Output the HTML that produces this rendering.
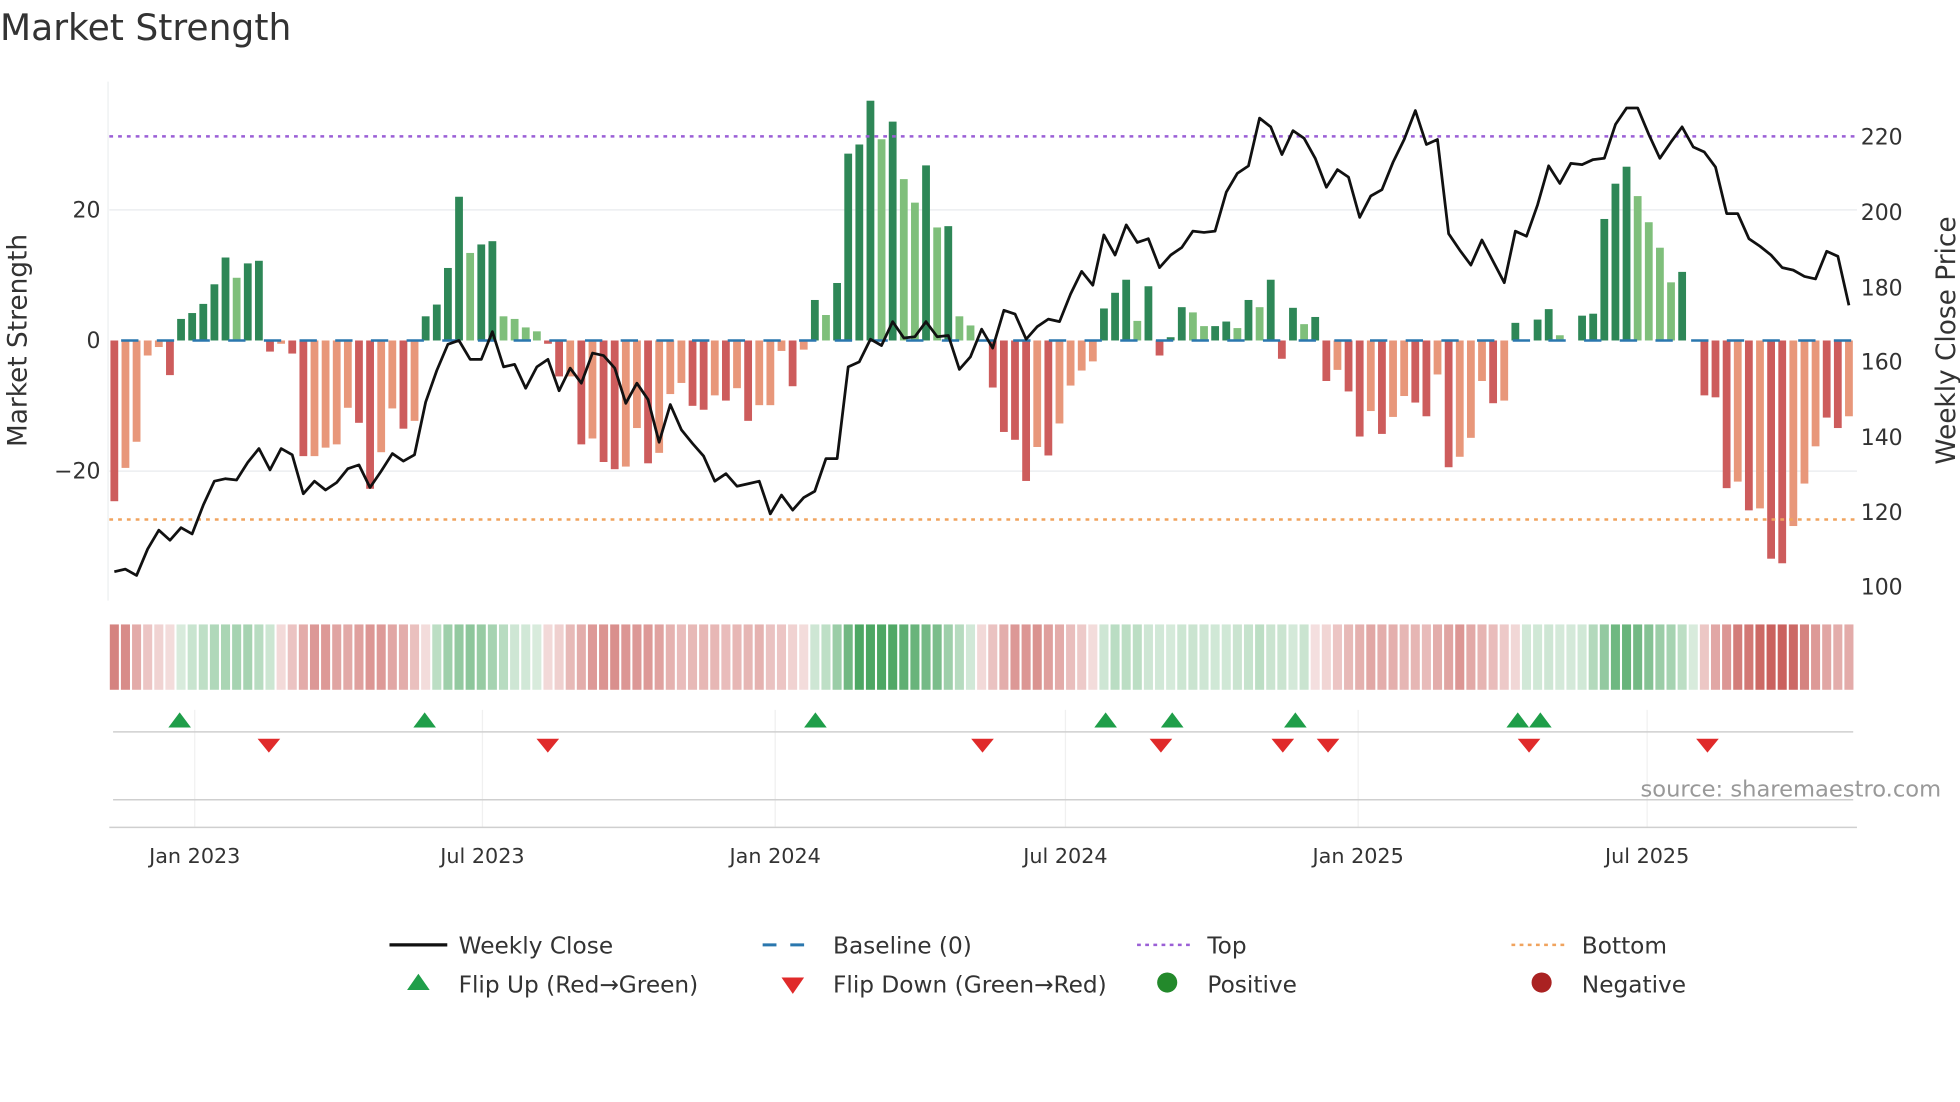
<!DOCTYPE html>
<html><head><meta charset="utf-8"><style>
html,body{margin:0;padding:0;background:#fff;width:1960px;height:1102px;overflow:hidden}
svg{display:block}
text{font-family:"DejaVu Sans","Liberation Sans",sans-serif;fill:#333}
</style></head><body>
<svg id="s" width="1960" height="1102" viewBox="0 0 1560 877.1" preserveAspectRatio="none" xmlns="http://www.w3.org/2000/svg">
<text x="0" y="32" font-size="28.7">Market Strength</text>
<line x1="87" y1="167" x2="1478" y2="167" stroke="#eceef0" stroke-width="1.2"/>
<line x1="87" y1="375" x2="1478" y2="375" stroke="#eceef0" stroke-width="1.2"/>
<line x1="86" y1="65" x2="86" y2="478" stroke="#eceef0" stroke-width="1"/>
<g id="bars"></g>
<g id="strip"></g>
<line x1="87" y1="108.5" x2="1478" y2="108.5" stroke="#9b5fd6" stroke-width="2" stroke-dasharray="3 4"/>
<line x1="87" y1="413.5" x2="1478" y2="413.5" stroke="#f0a35e" stroke-width="2" stroke-dasharray="3 4"/>
<line x1="87" y1="271" x2="1478" y2="271" stroke="#2a77ae" stroke-width="2" stroke-dasharray="13.8 14.6" stroke-dashoffset="19"/>
<polyline id="price" fill="none" stroke="#111" stroke-width="2.2" stroke-linejoin="round"/>
<g font-size="17.5" text-anchor="end">
<text x="80" y="173">20</text><text x="80" y="277">0</text><text x="80" y="381">−20</text>
</g>
<g font-size="17.5">
<text x="1481" y="115">220</text><text x="1481" y="175">200</text><text x="1481" y="235">180</text><text x="1481" y="294">160</text><text x="1481" y="354">140</text><text x="1481" y="414">120</text><text x="1481" y="473">100</text>
</g>
<text transform="translate(21,271) rotate(-90)" font-size="21" text-anchor="middle">Market Strength</text>
<text transform="translate(1556,271) rotate(-90)" font-size="21" text-anchor="middle">Weekly Close Price</text>
<g stroke="#f0f0f0" stroke-width="1">
<line x1="155" y1="565" x2="155" y2="658"/><line x1="384" y1="565" x2="384" y2="658"/><line x1="617" y1="565" x2="617" y2="658"/><line x1="848" y1="565" x2="848" y2="658"/><line x1="1081" y1="565" x2="1081" y2="658"/><line x1="1311" y1="565" x2="1311" y2="658"/>
</g>
<line x1="90" y1="582.5" x2="1475" y2="582.5" stroke="#cfcfcf" stroke-width="1.2"/>
<line x1="90" y1="636.5" x2="1475" y2="636.5" stroke="#cfcfcf" stroke-width="1.2"/>
<line x1="87" y1="658.5" x2="1478" y2="658.5" stroke="#cfcfcf" stroke-width="1.2"/>
<g id="tri"></g>
<text x="1545" y="634" font-size="18" text-anchor="end" style="fill:#999">source: sharemaestro.com</text>
<g font-size="16.5" text-anchor="middle">
<text x="155" y="687">Jan 2023</text><text x="384" y="687">Jul 2023</text><text x="617" y="687">Jan 2024</text><text x="848" y="687">Jul 2024</text><text x="1081" y="687">Jan 2025</text><text x="1311" y="687">Jul 2025</text>
</g>
<g font-size="18.5">
<line x1="310" y1="752" x2="356" y2="752" stroke="#111" stroke-width="2.6"/>
<text x="365" y="759">Weekly Close</text>
<line x1="607" y1="752" x2="651" y2="752" stroke="#2a77ae" stroke-width="2.4" stroke-dasharray="11 11"/>
<text x="663" y="759">Baseline (0)</text>
<line x1="905" y1="752" x2="949" y2="752" stroke="#9b5fd6" stroke-width="2" stroke-dasharray="3 3.5"/>
<text x="961" y="759">Top</text>
<line x1="1203" y1="752" x2="1247" y2="752" stroke="#f0a35e" stroke-width="2" stroke-dasharray="3 3.5"/>
<text x="1259" y="759">Bottom</text>
<polygon points="324,788 342,788 333,775" fill="#1f9e49"/>
<text x="365" y="790">Flip Up (Red→Green)</text>
<polygon points="622,778 640,778 631,791" fill="#e02a2a"/>
<text x="663" y="790">Flip Down (Green→Red)</text>
<circle cx="929" cy="782" r="8" fill="#23892b"/>
<text x="961" y="790">Positive</text>
<circle cx="1227" cy="782" r="8" fill="#aa2222"/>
<text x="1259" y="790">Negative</text>
</g>
</svg>
<script>
var V=[-24.6,-19.5,-15.5,-2.3,-1,-5.3,3.3,4.2,5.6,8.6,12.7,9.6,11.8,12.2,-1.7,-0.5,-2,-17.7,-17.7,-16.4,-15.9,-10.3,-12.6,-22.7,-17.1,-10.4,-13.5,-12.3,3.7,5.5,11.1,22,13.4,14.7,15.2,3.7,3.3,2,1.4,-0.5,-5.5,-5.5,-15.9,-15,-18.6,-19.7,-19.3,-13.4,-18.8,-17.2,-8.2,-6.5,-10,-10.6,-8.4,-9.2,-7.3,-12.3,-9.9,-9.9,-1.6,-7,-1.4,6.2,3.9,8.8,28.6,30,36.7,30.8,33.5,24.7,21.1,26.8,17.3,17.5,3.7,2.3,0,-7.2,-14,-15.2,-21.5,-16.3,-17.6,-12.7,-6.9,-4.6,-3.2,4.9,7.3,9.3,3,8.3,-2.3,0.5,5.1,4.3,2.2,2.2,2.9,1.9,6.2,5.1,9.3,-2.8,5,2.5,3.6,-6.2,-4.5,-7.8,-14.7,-10.8,-14.3,-11.7,-8.5,-9.5,-11.6,-5.2,-19.4,-17.8,-14.9,-6.2,-9.6,-9.2,2.7,0,3.2,4.8,0.8,0,3.8,4.1,18.6,24,26.6,22.1,18.1,14.2,8.9,10.5,0,-8.4,-8.7,-22.6,-21.6,-26,-25.7,-33.4,-34.1,-28.4,-21.9,-16.2,-11.8,-13.4,-11.6];
var DL="DLLLLDDDDD"+"DLDDDLDDLL"+"LLDDLLDLDD"+"DDLDDLLLLD"+"DLDLDDLLDL"+"LLDDLDLDLL"+"LDLDLDDDDL"+"DLLDLDLLDD"+"DDDLDLLLLD"+"DDLDDDDLLD"+"DLDLDDDLDD"+"LDDLDLLDDL"+"DLLLDLDDDD"+"LDDDDDDLLL"+"LDDDDDLDLD"+"DLLLDDL";
var P=[455,453,458,437,422,430,420,425,402,383,381,382,368,357,374,357,362,393,383,390,384,373,370,388,375,361,367,362,320,295,274,271,286,286,264,292,290,309,292,286,311,293,305,281,283,293,321,305,318,352,322,342,353,363,383,377,387,385,383,409,394,406,396,391,365,365,292,288,270,275,256,269,268,256,268,267,294,284,262,277,247,250,270,260,254,256,234,216,227,187,203,179,193,190,213,203,197,184,185,184,153,138,132,94,101,123,104,110,126,149,135,141,173,156,151,129,111,88,115,111,186,199,211,191,208,225,184,188,163,132,146,130,131,127,126,99,86,86,107,126,113,101,117,121,133,170,170,190,196,203,213,215,220,222,200,204,243];
var NS="http://www.w3.org/2000/svg",x0=91,st=8.85;
function el(t,a,p){var e=document.createElementNS(NS,t);for(var k in a)e.setAttribute(k,a[k]);p.appendChild(e);return e;}
var bars=document.getElementById('bars'),strip=document.getElementById('strip'),tri=document.getElementById('tri');
var pts=[];
for(var i=0;i<V.length;i++){
 var x=x0+i*st,v=V[i],d=DL[i]=='D';
 if(v!=0){var h=Math.abs(v)*5.2;var c=v>0?(d?'#2e8757':'#7fbf7b'):(d?'#cd5c5c':'#e8977a');
  el('rect',{x:x-3.1,y:v>0?271-h:271,width:6.2,height:h,fill:c},bars);}
 var a=0,n=0;for(var j=Math.max(0,i-1);j<=Math.min(V.length-1,i+1);j++){a+=V[j];n++;}a/=n;
 var o=0.18+0.72*Math.min(Math.abs(a)/30,1);
 el('rect',{x:x-3.6,y:497,width:7.2,height:52,fill:a>=0?'#3a9d52':'#c4504c','fill-opacity':o.toFixed(2)},strip);
 pts.push(x.toFixed(1)+','+P[i]);
}
document.getElementById('price').setAttribute('points',pts.join(' '));
[143,338,649,880,933,1031,1208,1226].forEach(function(x){el('polygon',{points:(x-9)+',579 '+(x+9)+',579 '+x+',567',fill:'#1f9e49'},tri);});
[214,436,782,924,1021,1057,1217,1359].forEach(function(x){el('polygon',{points:(x-9)+',588 '+(x+9)+',588 '+x+',599',fill:'#e02a2a'},tri);});
</script>
</body></html>
